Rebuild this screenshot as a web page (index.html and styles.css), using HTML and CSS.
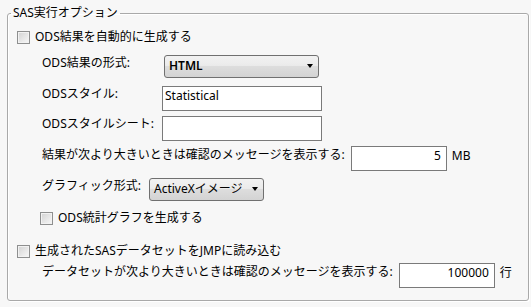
FILE: index.html
```html
<!DOCTYPE html>
<html lang="ja">
<head>
<meta charset="utf-8">
<title>SAS実行オプション</title>
<link rel="stylesheet" href="styles.css">
</head>
<body>
<fieldset class="group">
  <legend class="group-title">SAS実行オプション</legend>
  <div class="group-body">
    <div class="check-row r-first"><span class="checkbox"></span><span>ODS結果を自動的に生成する</span></div>
    <div class="sub">
      <div class="form-grid">
        <span class="label">ODS結果の形式:</span>
        <div class="select select-format"><span class="select-text strong">HTML</span><span class="arrow"></span></div>
        <span class="label">ODSスタイル:</span>
        <div class="field field-wide">Statistical</div>
        <span class="label">ODSスタイルシート:</span>
        <div class="field field-wide"></div>
      </div>
      <div class="row r-size">
        <span class="label">結果が次より大きいときは確認のメッセージを表示する:</span>
        <div class="field field-num">5</div>
        <span class="unit">MB</span>
      </div>
      <div class="row r-graph">
        <span class="label">グラフィック形式:</span>
        <div class="select select-graph"><span class="select-text">ActiveXイメージ</span><span class="arrow"></span></div>
      </div>
      <div class="check-row r-stat"><span class="checkbox"></span><span>ODS統計グラフを生成する</span></div>
    </div>
    <div class="check-row r-jmp"><span class="checkbox"></span><span>生成されたSASデータセットをJMPに読み込む</span></div>
    <div class="sub">
      <div class="row r-rows">
        <span class="label">データセットが次より大きいときは確認のメッセージを表示する:</span>
        <div class="field field-num">100000</div>
        <span class="unit">行</span>
      </div>
    </div>
  </div>
</fieldset>
</body>
</html>
```

FILE: styles.css
```css
html, body {
  margin: 0;
}
body {
  width: 531px;
  height: 307px;
  box-sizing: border-box;
  padding: 5px 2px 0 7px;
  background: #f7f7f7;
  color: #000;
  font-family: "Noto Sans", "Noto Sans CJK JP", sans-serif;
  font-size: 12px;
  line-height: 16px;
  overflow: hidden;
}
.group {
  margin: 0;
  padding: 0;
  min-inline-size: 0;
  height: 296px;
  box-sizing: border-box;
  border: 1px solid #a9a9a9;
  border-radius: 3px;
  box-shadow: inset 1px 1px 0 #ffffff, 1px 1px 0 #ffffff;
}
.group-title {
  margin-left: 3px;
  padding: 0 2px;
  line-height: 16px;
}
.group-body {
  padding: 8px 0 0 9px;
  display: flex;
  flex-direction: column;
  align-items: flex-start;
}
.check-row {
  display: flex;
  align-items: center;
  gap: 5px;
  height: 16px;
}
.checkbox {
  width: 11px;
  height: 11px;
  border: 1px solid #8e8f8f;
  background: linear-gradient(135deg, #d2d2d2 0%, #e9e9e9 60%, #f7f7f7 100%);
  box-shadow: inset 0 0 0 1px #f2f2f2;
  flex: none;
}
.sub {
  padding-left: 25px;
  display: flex;
  flex-direction: column;
  align-items: flex-start;
}
.form-grid {
  margin-top: 10px;
  display: grid;
  grid-template-columns: 120px auto;
  row-gap: 5px;
  align-items: start;
}
.label {
  white-space: nowrap;
}
.row {
  display: flex;
  align-items: flex-start;
}
.field {
  box-sizing: border-box;
  height: 25px;
  border: 1px solid #7a7a7a;
  background: #fff;
  padding: 1px 2px 0;
  white-space: nowrap;
}
.field-wide {
  width: 160px;
}
.field-num {
  width: 96px;
  margin-left: 6px;
  text-align: right;
  padding-right: 5px;
}
.unit {
  margin-left: 5px;
  padding-top: 2px;
}
.select {
  box-sizing: border-box;
  height: 23px;
  border: 1px solid #707070;
  border-radius: 3px;
  background: linear-gradient(#f2f2f2, #ebebeb 45%, #dddddd 50%, #d3d3d3);
  display: flex;
  align-items: center;
  justify-content: space-between;
  padding: 0 5px 1px 4px;
}
.select-format {
  width: 155px;
  margin-left: 2px;
  margin-bottom: 3px;
}
.select-graph {
  width: 115px;
  margin-left: 8px;
}
.strong {
  font-weight: 600;
}
.arrow {
  width: 0;
  height: 0;
  border-left: 3.5px solid transparent;
  border-right: 3.5px solid transparent;
  border-top: 4px solid #000;
}
.r-size {
  margin-top: 5px;
}
.r-size .label {
  padding-top: 1px;
}
.r-graph {
  margin-top: 7px;
}
.r-stat {
  margin-top: 9px;
  margin-left: -2px;
}
.r-jmp {
  margin-top: 17px;
}
.r-rows {
  margin-top: 4px;
}
.r-rows .label {
  padding-top: 1px;
}
```
